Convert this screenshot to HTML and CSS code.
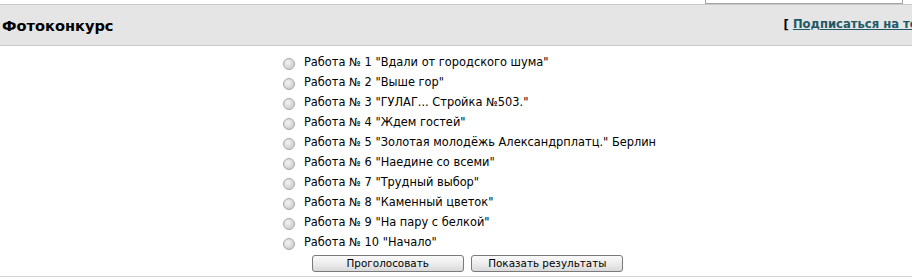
FILE: index.html
```html
<!DOCTYPE html>
<html lang="ru">

<head>
    <meta charset="UTF-8">
    <title>Фотоконкурс</title>
    <link rel="stylesheet" href="styles.css">
</head>

<body>
    <div class="topbar">
        <div class="search"></div>
    </div>
    <div class="cat">
        <h2 class="cat_title">Фотоконкурс</h2>
        <div class="cat_links">[ <a href="#">Подписаться на тему</a> ]</div>
    </div>
    <form class="poll">
        <table class="poll_table">
            <tr><td class="rb"><input type="radio" name="v"></td><td>Работа № 1 "Вдали от городского шума"</td></tr>
            <tr><td class="rb"><input type="radio" name="v"></td><td>Работа № 2 "Выше гор"</td></tr>
            <tr><td class="rb"><input type="radio" name="v"></td><td>Работа № 3 "ГУЛАГ... Стройка №503."</td></tr>
            <tr><td class="rb"><input type="radio" name="v"></td><td>Работа № 4 "Ждем гостей"</td></tr>
            <tr><td class="rb"><input type="radio" name="v"></td><td>Работа № 5 "Золотая молодёжь Александрплатц." Берлин</td></tr>
            <tr><td class="rb"><input type="radio" name="v"></td><td>Работа № 6 "Наедине со всеми"</td></tr>
            <tr><td class="rb"><input type="radio" name="v"></td><td>Работа № 7 "Трудный выбор"</td></tr>
            <tr><td class="rb"><input type="radio" name="v"></td><td>Работа № 8 "Каменный цветок"</td></tr>
            <tr><td class="rb"><input type="radio" name="v"></td><td>Работа № 9 "На пару с белкой"</td></tr>
            <tr><td class="rb"><input type="radio" name="v"></td><td>Работа № 10 "Начало"</td></tr>
            <tr>
                <td colspan="2" class="btns">
                    <button type="button" class="btn">Проголосовать</button>
                    <button type="button" class="btn">Показать результаты</button>
                </td>
            </tr>
        </table>
    </form>
</body>

</html>
```

FILE: styles.css
```css
* {
    margin: 0;
    padding: 0;
    box-sizing: border-box;
}

body {
    width: 912px;
    overflow: hidden;
    font-family: "DejaVu Sans", Verdana, sans-serif;
    font-size: 11.4px;
    color: #000;
    background: #fff;
}

.topbar {
    height: 4px;
    position: relative;
}

.search {
    position: absolute;
    left: 705px;
    top: -20px;
    width: 198px;
    height: 24px;
    border: 1px solid #a5a5a5;
    background: #fff;
}

.cat {
    display: flex;
    justify-content: space-between;
    align-items: center;
    height: 42px;
    padding-left: 2px;
    background-color: #e5e5e5;
    border-top: 1px solid #c9c9c9;
    border-bottom: 1px solid #c9c9c9;
    white-space: nowrap;
    overflow: hidden;
}

.cat_title {
    font-size: 14.6px;
    font-weight: bold;
}

.cat_links {
    flex-shrink: 0;
    font-size: 11.6px;
    font-weight: bold;
    margin-left: auto;
    margin-right: -32px;
    margin-top: -3px;
}

.cat_links a {
    color: #1e5a66;
}

.poll {
    padding-left: 279px;
    padding-top: 6px;
    border-bottom: 1px solid #d0d0d0;
    height: 231px;
}

.poll_table {
    border-collapse: collapse;
}

.poll_table td {
    height: 20px;
    padding: 0;
    vertical-align: middle;
    white-space: nowrap;
}

.rb {
    width: 25px;
}

.rb input {
    appearance: none;
    display: block;
    width: 12px;
    height: 12px;
    margin: 3px 0 0 4px;
    border: 1px solid #a8a8a8;
    border-radius: 50%;
    background: radial-gradient(circle at 40% 35%, #f4f4f4, #d6d6d6 60%, #c4c4c4);
}

.btns {
    text-align: center;
    padding-top: 2px !important;
}

.btn {
    width: 152px;
    height: 17px;
    margin: 0 2px;
    font-family: "DejaVu Sans", Verdana, sans-serif;
    font-size: 10.4px;
    color: #000;
    border: 1px solid #7a7a7a;
    border-radius: 3px;
    background: linear-gradient(#fafafa, #ececec 50%, #d9d9d9);
}
```
